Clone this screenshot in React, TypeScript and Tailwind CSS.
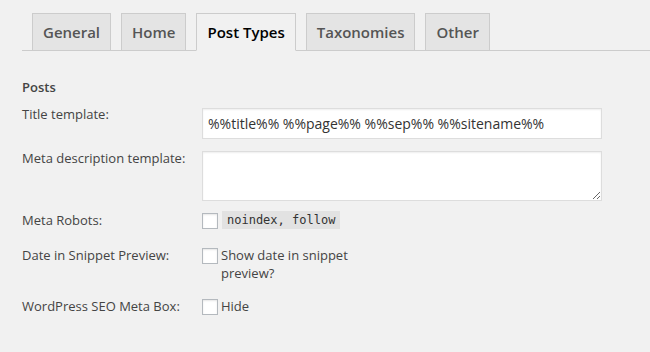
const tabs = ["General", "Home", "Post Types", "Taxonomies", "Other"];

function Checkbox() {
  return (
    <input
      type="checkbox"
      className="appearance-none m-0 mt-[2px] w-4 h-4 shrink-0 bg-white border border-[#b4b9be] shadow-[inset_0_1px_2px_rgba(0,0,0,0.1)]"
    />
  );
}

export default function App() {
  return (
    <div className="min-h-[352px] bg-[#f1f1f1] pl-[22px] pt-[13px] text-[13px] leading-[18px] text-[#444] font-['Open_Sans',sans-serif]">
      {/* Tabs */}
      <div className="flex gap-[10px] pl-[10px] border-b border-[#ccc]">
        {tabs.map((t) => {
          const active = t === "Post Types";
          return (
            <div
              key={t}
              className={
                active
                  ? "-mb-px px-[10px] py-[6px] text-[15px] leading-[24px] font-semibold border border-[#ccc] border-b-[#f1f1f1] bg-[#f1f1f1] text-black"
                  : "-mb-px px-[10px] py-[6px] text-[15px] leading-[24px] font-semibold border border-[#ccc] bg-[#e4e4e4] text-[#555]"
              }
            >
              {t}
            </div>
          );
        })}
      </div>

      <div className="pr-[48px]">
        <h4 className="mt-[27px] font-semibold text-[13px]">Posts</h4>

        {/* Title template */}
        <div className="flex mt-[9px]">
          <label className="w-[180px] shrink-0">Title template:</label>
          <input
            type="text"
            defaultValue="%%title%% %%page%% %%sep%% %%sitename%%"
            className="mt-[3px] flex-1 h-[31px] px-[5px] bg-white border border-[#ddd] shadow-[inset_0_1px_2px_rgba(0,0,0,0.07)] text-[14px] text-[#333] outline-none font-['Open_Sans',sans-serif]"
          />
        </div>

        {/* Meta description */}
        <div className="flex mt-[10px]">
          <label className="w-[180px] shrink-0">Meta description template:</label>
          <textarea className="mt-[2px] flex-1 h-[50px] bg-white border border-[#ddd] shadow-[inset_0_1px_2px_rgba(0,0,0,0.07)] outline-none" />
        </div>

        {/* Meta robots */}
        <div className="flex mt-[10px]">
          <label className="w-[180px] shrink-0">Meta Robots:</label>
          <div className="flex items-start gap-[4px]">
            <Checkbox />
            <code className="px-[5px] bg-[#e2e2e2] text-[12px] leading-[18px] text-[#333] font-['DejaVu_Sans_Mono',monospace]">
              noindex, follow
            </code>
          </div>
        </div>

        {/* Date in snippet */}
        <div className="flex mt-[17px]">
          <label className="w-[180px] shrink-0">Date in Snippet Preview:</label>
          <div className="flex items-start gap-[3px]">
            <Checkbox />
            <span className="w-[135px]">Show date in snippet preview?</span>
          </div>
        </div>

        {/* Meta box */}
        <div className="flex mt-[15px]">
          <label className="w-[180px] shrink-0">WordPress SEO Meta Box:</label>
          <div className="flex items-start gap-[3px]">
            <Checkbox />
            <span>Hide</span>
          </div>
        </div>
      </div>
    </div>
  );
}
